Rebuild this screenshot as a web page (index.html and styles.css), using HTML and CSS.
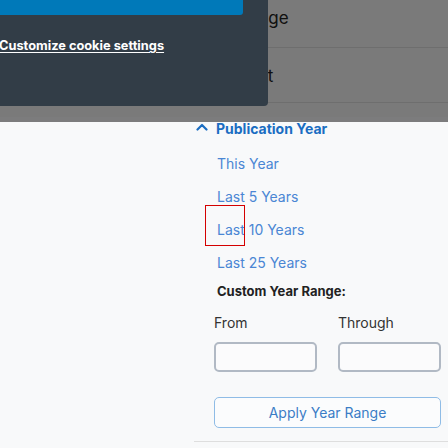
FILE: index.html
```html
<!DOCTYPE html>
<html lang="en">
<head>
<meta charset="utf-8">
<title>Publication Year filter</title>
<link rel="stylesheet" href="styles.css">
</head>
<body>
<div class="page">
  <div class="top">
    <div class="bg-row bg-row-1"><span class="bg-text">Language</span></div>
    <div class="bg-row bg-row-2"><span class="bg-text">Format</span></div>
  </div>
  <section class="filters">
    <button class="facet-head" type="button">
      <svg class="chev" width="12" height="8" viewBox="0 0 12 8"><path d="M1.5 6.5 L6 2 L10.5 6.5" fill="none" stroke="#1a6dc2" stroke-width="2.2" stroke-linecap="round" stroke-linejoin="round"/></svg>
      <span>Publication Year</span>
    </button>
    <ul class="options">
      <li><a href="#">This Year</a></li>
      <li><a href="#">Last 5 Years</a></li>
      <li class="marked"><a href="#">Last 10 Years</a></li>
      <li><a href="#">Last 25 Years</a></li>
    </ul>
    <div class="custom">
      <h3 class="custom-title">Custom Year Range:</h3>
      <div class="range">
        <label class="field"><span>From</span><input type="text"></label>
        <label class="field"><span>Through</span><input type="text"></label>
      </div>
      <button class="apply" type="button">Apply Year Range</button>
    </div>
    <hr class="rule">
  </section>
  <div class="overlay"></div>
  <div class="cookie">
    <div class="cookie-btn"></div>
    <a class="cookie-link" href="#">Customize cookie settings</a>
  </div>
</div>
</body>
</html>
```
FILE: styles.css
```css
* { box-sizing: border-box; }
html, body { margin: 0; padding: 0; }
body {
  background: #f8f9fa;
  font-family: Inter, "Noto Sans", sans-serif;
  width: 448px;
  height: 448px;
  overflow: hidden;
}
.page {
  position: relative;
  width: 448px;
  height: 448px;
}
.top {
  height: 117px;
  background: #f4f4f4;
  display: flex;
  flex-direction: column;
}
.bg-row {
  border-bottom: 1px solid #dcdcdc;
  display: flex;
  align-items: center;
}
.bg-row-1 { height: 48px; padding-bottom: 12px; padding-left: 209px; }
.bg-row-2 { height: 55px; padding-left: 217px; padding-top: 2px; }
.bg-text {
  font-size: 17px;
  color: #222;
}
.filters {
  margin-left: 194px;
  display: flex;
  flex-direction: column;
}
.facet-head {
  display: flex;
  align-items: center;
  gap: 8px;
  background: none;
  border: 0;
  padding: 0 0 0 2px;
  height: 22px;
  font-family: inherit;
  font-size: 14px;
  font-weight: 700;
  color: #1a6dc2;
  cursor: pointer;
}
.chev { flex: none; margin-top: -2px; }
.options {
  list-style: none;
  margin: 0;
  padding: 14px 0 0 23px;
  display: flex;
  flex-direction: column;
  gap: 13px;
}
.options li { height: 20px; line-height: 20px; position: relative; }
.options a {
  font-size: 14px;
  color: #4a86d4;
  text-decoration: none;
}
.marked::after {
  content: "";
  position: absolute;
  left: -12px;
  top: -14px;
  width: 38px;
  height: 39px;
  border: 1px solid #d40000;
}
.custom {
  padding: 10px 7px 0 20px;
  display: flex;
  flex-direction: column;
}
.custom-title {
  margin: 0 0 0 3px;
  font-size: 13px;
  font-weight: 700;
  color: #222;
  line-height: 18px;
}
.range {
  display: flex;
  gap: 21px;
  margin-top: 14px;
}
.field {
  display: flex;
  flex-direction: column;
  gap: 10px;
  width: 103px;
}
.field span {
  font-size: 14px;
  color: #333;
  line-height: 18px;
}
.field input {
  width: 103px;
  height: 30px;
  border: 2px solid #b1b9c4;
  border-radius: 5px;
  background: #fbfbfc;
  margin: 0;
}
.apply {
  margin-top: 25px;
  width: 227px;
  height: 31px;
  border: 1px solid #8fbce6;
  border-radius: 5px;
  background: #fbfcfd;
  color: #3b7dc6;
  font-family: inherit;
  font-size: 14px;
  padding: 0;
  cursor: pointer;
}
.rule {
  margin: 13px 0 0 0;
  border: 0;
  border-top: 1px solid #dedede;
  height: 0;
}
.overlay {
  position: absolute;
  left: 0;
  top: 0;
  width: 448px;
  height: 122px;
  background: rgba(0, 0, 0, 0.5);
}
.cookie {
  position: absolute;
  left: 0;
  top: 0;
  width: 268px;
  height: 106px;
  background: #323d47;
  border-bottom-right-radius: 4px;
  display: flex;
  flex-direction: column;
}
.cookie-btn {
  width: 243px;
  height: 15px;
  background: #0079b9;
  border-bottom-right-radius: 3px;
}
.cookie-link {
  margin: 23px 0 0 -1px;
  font-size: 12.8px;
  font-weight: 700;
  color: #fff;
  text-decoration: underline;
  text-underline-offset: 2px;
  line-height: 16px;
}
```
